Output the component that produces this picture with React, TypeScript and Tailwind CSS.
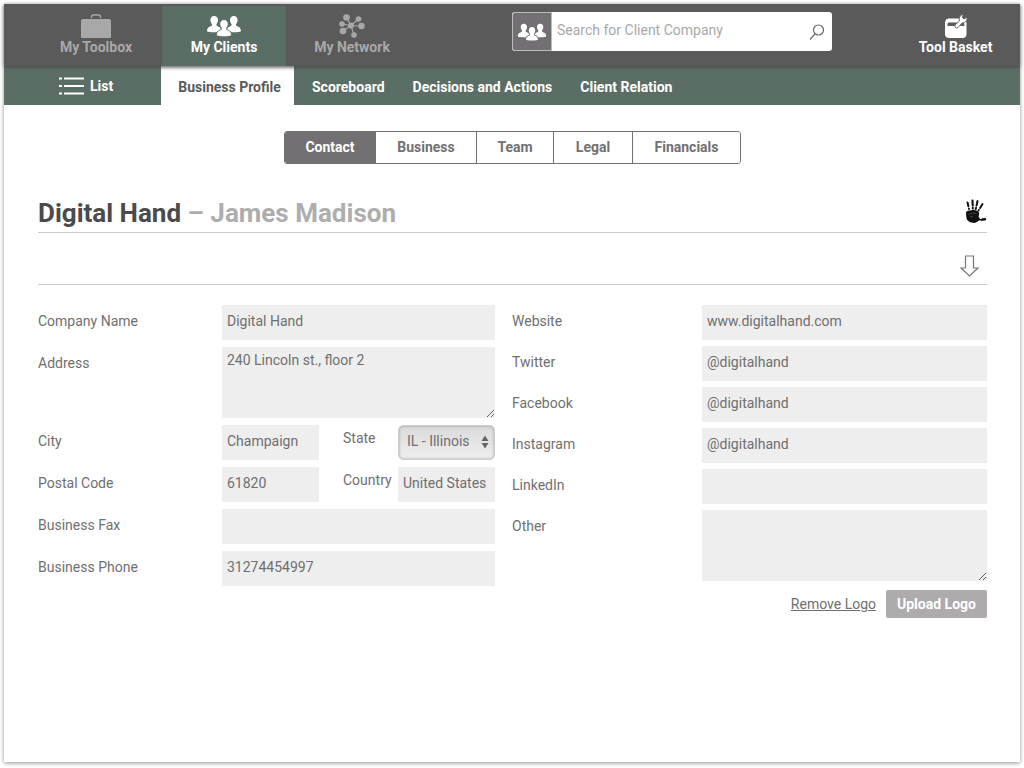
import { useState } from 'react'
import type { ReactNode } from 'react'
import clsx from 'clsx'

const subNav = ['Scoreboard', 'Decisions and Actions', 'Client Relation']

const sections = [
  { name: 'Contact', width: 'w-[91px]' },
  { name: 'Business', width: 'w-[101px]' },
  { name: 'Team', width: 'w-[77px]' },
  { name: 'Legal', width: 'w-[79px]' },
  { name: 'Financials', width: 'w-[107px]' },
]

const field = 'block w-full min-w-0 rounded-none bg-[#eee] px-[5px] outline-none focus:bg-[#e6e6e6]'

function PeopleIcon({ className }: { className: string }) {
  const person = 'M0-9.500c-2.500 0-3.800 1.700-3.800 4.100 0 1.500.5 2.800 1.300 3.700.5.700.4 1.900-.3 2.300C-4.500 1.500-7 1.700-7.200 5.500c0 .9 3 1.300 7.200 1.300s7.200-.4 7.200-1.300C7 1.700 4.500 1.500 2.800.6c-.7-.4-.8-1.600-.3-2.300.8-.9 1.300-2.200 1.300-3.700C3.800-7.800 2.500-9.500 0-9.500z'
  return (
    <svg viewBox="0 0 36 24" className={className} fill="currentColor" aria-hidden="true">
      <path d={person} transform="translate(8.200 11.500)" />
      <path d={person} transform="translate(27.800 11.500)" />
      <path d={person} transform="translate(18 15.500)" stroke="var(--gap)" strokeWidth="2" style={{ paintOrder: 'stroke' }} />
    </svg>
  )
}

function BriefcaseIcon() {
  return (
    <svg viewBox="0 0 30 24" className="h-6 w-[30px]" fill="currentColor" aria-hidden="true">
      <rect x="0" y="5" width="30" height="19" rx="1.500" />
      <path d="M10.500 4V2.500q0-1.500 1.500-1.500h6q1.500 0 1.500 1.500V4" fill="none" stroke="currentColor" strokeWidth="1.400" />
    </svg>
  )
}

function NetworkIcon() {
  return (
    <svg viewBox="0 0 26 24" className="h-6 w-[26px]" fill="currentColor" aria-hidden="true">
      <path d="M12 11.500 7.500 3.500M12 11.500 19.500 5M12 11.500 22.500 12M12 11.500 15 21M12 11.500 4 17M12 11.500 3 10" stroke="currentColor" strokeWidth="1.200" />
      <circle cx="12" cy="11.500" r="3" />
      <circle cx="7.500" cy="3.500" r="3.300" />
      <circle cx="19.500" cy="5" r="2.800" />
      <circle cx="22.500" cy="12" r="3.200" />
      <circle cx="15" cy="21" r="2.800" />
      <circle cx="4" cy="17" r="3.300" />
      <circle cx="3" cy="10" r="2.800" />
    </svg>
  )
}

function BasketIcon() {
  return (
    <svg viewBox="0 0 24 24" className="size-6" aria-hidden="true">
      <path d="M5 4.500h12q5.500 0 5.500 5V20q0 4-4 4h-13.500Q1 24 1 20V9q0-4.500 4-4.500z" fill="#fff" />
      <path d="M4.500 8.500h9.500l-3 3.500H3.500V9.500zM18.500 9h1.500l.5 3h-5z" fill="#5a5a5a" />
      <path d="M11.500 13.500q-1.500-1.500 0-3L15.500 7c-.8-3 .7-6 3.700-7l-.7 3.800 1.500 1.200 3-2c.5 3.500-1.800 6-5 6l-4 4.500q-1.200 1.200-2.500 0z" fill="#fff" stroke="#5a5a5a" strokeWidth=".9" />
    </svg>
  )
}

function HandIcon() {
  return (
    <svg viewBox="0 0 22 24" className="mb-1 h-6 w-[22px]" role="img" aria-label="Digital Hand logo">
      <g fill="none" stroke="#111" strokeLinecap="round">
        <path d="M2.500 3.500 4 10" strokeWidth="2" strokeDasharray="4 2.400" />
        <path d="M7.500 1.500 7.800 9.500" strokeWidth="2.100" strokeDasharray="5 2.400" />
        <path d="M12.500 2 10.800 10" strokeWidth="2" strokeDasharray="4.600 2.400" />
        <path d="M17.500 5 13.500 11.500" strokeWidth="2" strokeDasharray="4.600 2.400" />
        <path d="M13.500 20.500 17 21" strokeWidth="1.300" />
        <path d="M17.500 20.500 20 20.200" strokeWidth="2.400" />
      </g>
      <path d="M1 13 3 11.800l3-.5 3-.5 4 1.500 1.300 2-.7 3.500 1.400 2-1.800 2.500-3.500 1.700-4.700-.7-3.100-2.600-.7-3.500z" fill="#111" />
      <path d="m3.500 15.500 4-1.500 4 .5M5 18l3-.5" fill="none" stroke="#777" strokeWidth=".5" />
    </svg>
  )
}

function NavItem({ label, icon, active }: { label: string; icon: ReactNode; active?: boolean }) {
  return (
    <a
      href="#"
      className={clsx(
        'mt-[2px] flex h-[60px] flex-col items-center pt-2 leading-[18px] font-bold',
        active ? 'w-[124px] bg-[#5b6e65] text-white' : 'w-[132px] text-[#a9a8a8]',
      )}
    >
      {icon}
      <span className="whitespace-nowrap">{label}</span>
    </a>
  )
}

function Row({ id, label, wide, children }: { id: string; label: string; wide?: boolean; children: ReactNode }) {
  return (
    <div className="flex items-start">
      <label htmlFor={id} className={clsx('shrink-0 leading-8', wide ? 'w-[190px]' : 'w-[184px]')}>{label}</label>
      <div className="min-w-0 flex-1">{children}</div>
    </div>
  )
}

function TextField({ id, value = '' }: { id: string; value?: string }) {
  return <input id={id} defaultValue={value} className={`${field} h-[35px] pb-[3px]`} />
}

export default function App() {
  const [section, setSection] = useState('Contact')

  return (
    <div className="flex min-h-screen flex-col bg-white px-1 pt-1 pb-[6px] font-['Roboto','Liberation_Sans',sans-serif] text-[14px] text-[#6f6f6f]">
      <div className="flex flex-1 flex-col bg-white shadow-[0_1px_4px_rgba(0,0,0,0.45)]">
        <header className="relative flex h-[62px] bg-[#5a5a5a] shadow-[0_1px_4px_rgba(0,0,0,0.35)]">
          <nav className="flex pl-[26px]" aria-label="Main">
            <NavItem label="My Toolbox" icon={<BriefcaseIcon />} />
            <NavItem label="My Clients" active icon={<PeopleIcon className="h-6 w-9 [--gap:#5b6e65]" />} />
            <NavItem label="My Network" icon={<NetworkIcon />} />
          </nav>
          <form className="mt-2 ml-auto flex h-[39px] w-[320px] overflow-hidden rounded-[3px] bg-white" onSubmit={(e) => e.preventDefault()}>
            <span className="flex w-10 shrink-0 items-center justify-center rounded-l-[3px] border border-[#bbb] bg-[#727072] text-white">
              <PeopleIcon className="h-5 w-[30px] [--gap:#727072]" />
            </span>
            <input aria-label="Search for Client Company" placeholder="Search for Client Company" className="min-w-0 flex-1 px-[5px] pb-[2px] text-[14px] outline-none placeholder:text-[#a8a8a8]" />
            <button type="submit" aria-label="Search" className="flex w-[30px] items-center justify-center text-[#666]">
              <svg viewBox="0 0 16 16" className="size-4" fill="none" stroke="currentColor" strokeWidth="1.200">
                <circle cx="9.500" cy="6" r="5" />
                <path d="M6 9.800 1 15.500" />
              </svg>
            </button>
          </form>
          <a href="#" className="ml-[59px] flex w-[129px] flex-col items-center pt-[10px] leading-[18px] font-bold text-white">
            <BasketIcon />
            Tool Basket
          </a>
        </header>

        <nav className="flex h-[39px] bg-[#5b6e65] leading-[42px] font-bold text-white" aria-label="Clients">
          <a href="#" className="flex w-[157px] items-center pl-[55px]">
            <svg viewBox="0 0 25 18" className="mr-[6px] h-[18px] w-[25px]" stroke="currentColor" strokeWidth="2" aria-hidden="true">
              <path d="M0 1.500h3M5 1.500h20M0 9h3M5 9h20M0 16.500h3M5 16.500h20" />
            </svg>
            List
          </a>
          <a href="#" className="flex w-[133px] justify-center bg-white pl-1 text-[#5a5a5a] shadow-[inset_0_4px_3px_-2px_rgba(0,0,0,0.35)]">Business Profile</a>
          <div className="flex gap-7 pl-[18px]">
            {subNav.map((name) => <a key={name} href="#">{name}</a>)}
          </div>
        </nav>

        <main className="pt-[26px] pr-[33px] pl-[34px]">
          <div className="flex justify-center">
            <div className="flex h-[33px] overflow-hidden rounded-[3px] border border-[#727072]">
              {sections.map((s) => (
                <button
                  key={s.name}
                  type="button"
                  onClick={() => setSection(s.name)}
                  className={clsx(
                    s.width,
                    'border-r border-[#727072] font-bold last:border-r-0',
                    section === s.name ? 'bg-[#727072] text-white' : 'bg-white text-[#727072]',
                  )}
                >
                  {s.name}
                </button>
              ))}
            </div>
          </div>

          <div className="mt-[30px] flex h-[39px] items-center justify-between border-b border-[#ccc]">
            <h1 className="text-[26px] leading-[36px] font-bold text-[#4b4b4b]">
              Digital Hand <span className="text-[#adadad]">– James Madison</span>
            </h1>
            <HandIcon />
          </div>
          <div className="flex h-[52px] items-center justify-end border-b border-[#ccc] pt-[14px] pr-2">
            <button type="button" aria-label="Expand">
              <svg viewBox="0 0 19 22" className="h-[22px] w-[19px]" fill="none" stroke="#777" strokeWidth="1.200">
                <path d="M5.500 1h8v12h4.500l-8.500 8L1 13h4.500z" />
              </svg>
            </button>
          </div>

          <form className="mt-5 grid grid-cols-[457fr_475fr] items-start gap-x-[17px]" onSubmit={(e) => e.preventDefault()}>
            <div className="flex flex-col gap-[7px]">
              <Row id="company" label="Company Name"><TextField id="company" value="Digital Hand" /></Row>
              <Row id="address" label="Address">
                <textarea id="address" defaultValue="240 Lincoln st., floor 2" className={`${field} h-[71px] pt-[3px] leading-5`} />
              </Row>
              <Row id="city" label="City">
                <div className="grid grid-cols-[1fr_79px_1fr]">
                  <TextField id="city" value="Champaign" />
                  <label htmlFor="state" className="pl-6 leading-[26px]">State</label>
                  <div className="relative">
                    <select id="state" defaultValue="IL" className="h-[35px] w-full appearance-none rounded-[5px] border border-[#ccc] bg-linear-to-b from-[#dadada] to-[#efefef] pr-[22px] pb-[2px] pl-2 shadow-[inset_0_0_3px_rgba(0,0,0,0.3)] outline-none">
                      <option value="IL">IL - Illinois</option>
                      <option value="IN">IN - Indiana</option>
                      <option value="IA">IA - Iowa</option>
                    </select>
                    <svg viewBox="0 0 8 14" className="pointer-events-none absolute top-[10px] right-[6px] h-[14px] w-2" fill="#666" aria-hidden="true">
                      <path d="M4 0.500 7.500 6h-7zM4 13.500 7.500 8h-7z" />
                    </svg>
                  </div>
                </div>
              </Row>
              <Row id="postal" label="Postal Code">
                <div className="grid grid-cols-[1fr_79px_1fr]">
                  <TextField id="postal" value="61820" />
                  <label htmlFor="country" className="pl-6 leading-[26px]">Country</label>
                  <TextField id="country" value="United States" />
                </div>
              </Row>
              <Row id="fax" label="Business Fax"><TextField id="fax" /></Row>
              <Row id="phone" label="Business Phone"><TextField id="phone" value="31274454997" /></Row>
            </div>

            <div className="flex flex-col gap-[6px]">
              <Row wide id="website" label="Website"><TextField id="website" value="www.digitalhand.com" /></Row>
              <Row wide id="twitter" label="Twitter"><TextField id="twitter" value="@digitalhand" /></Row>
              <Row wide id="facebook" label="Facebook"><TextField id="facebook" value="@digitalhand" /></Row>
              <Row wide id="instagram" label="Instagram"><TextField id="instagram" value="@digitalhand" /></Row>
              <Row wide id="linkedin" label="LinkedIn"><TextField id="linkedin" /></Row>
              <Row wide id="other" label="Other">
                <textarea id="other" className={`${field} h-[71px] pt-[3px] leading-5`} />
              </Row>
              <div className="mt-[3px] flex items-center justify-end gap-[10px]">
                <a href="#" className="underline">Remove Logo</a>
                <button type="button" className="h-7 w-[101px] rounded-[2px] bg-[#adabac] font-bold text-white">Upload Logo</button>
              </div>
            </div>
          </form>
        </main>
      </div>
    </div>
  )
}
